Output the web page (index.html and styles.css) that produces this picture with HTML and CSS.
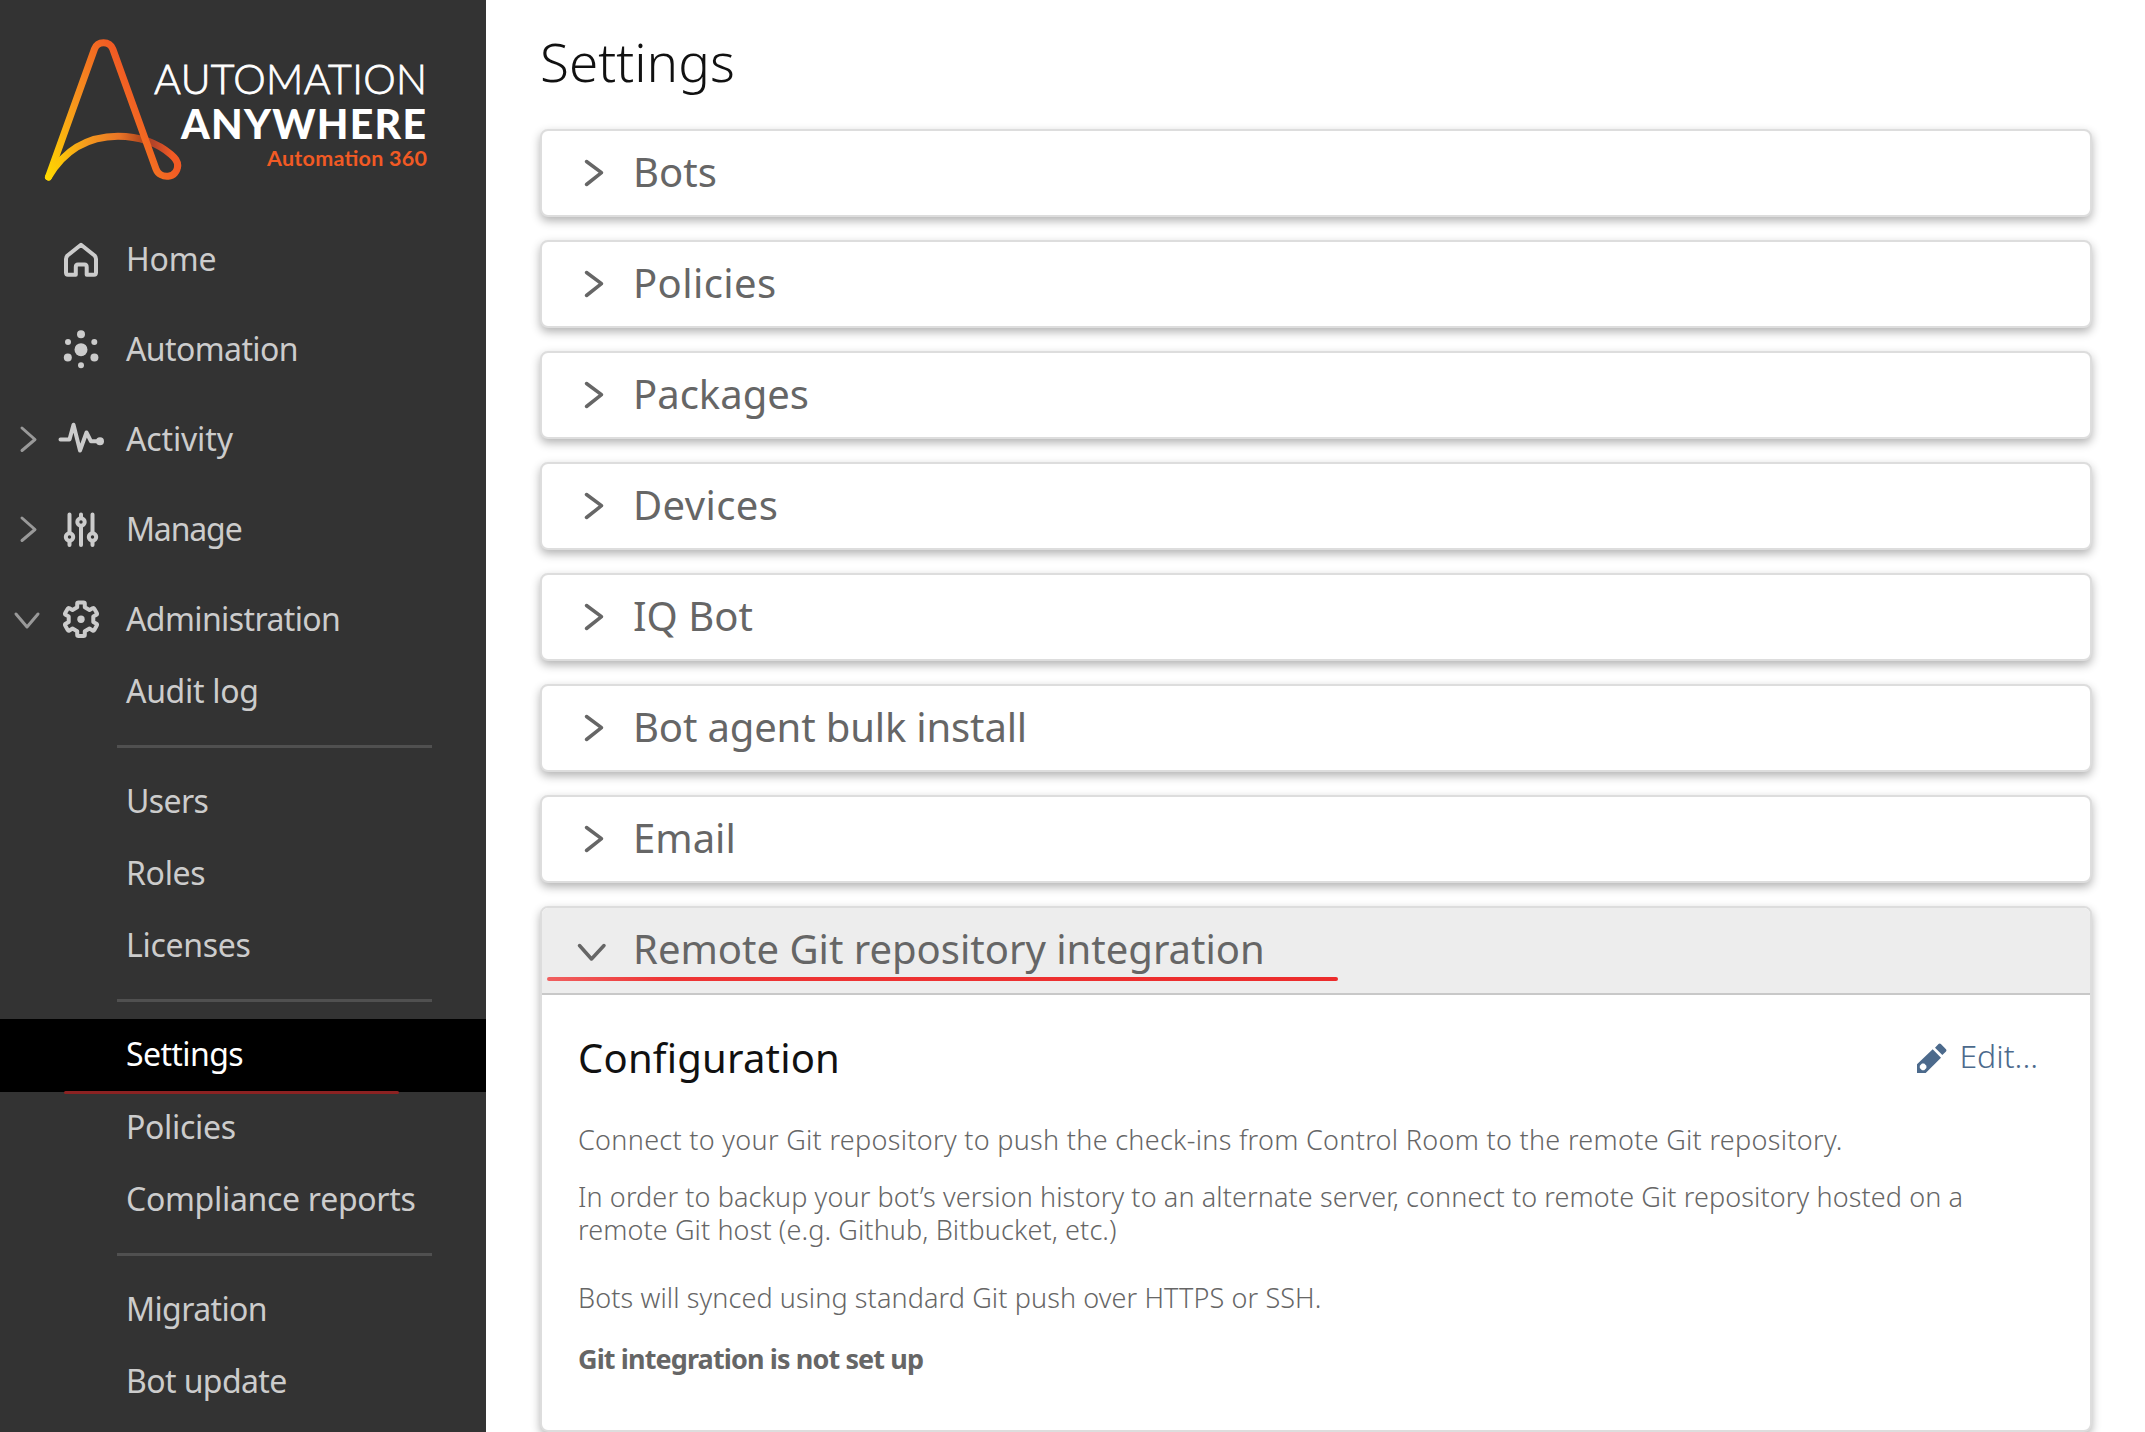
FILE: index.html
```html
<!DOCTYPE html>
<html lang="en">
<head>
<meta charset="utf-8">
<title>Settings</title>
<link rel="stylesheet" href="styles.css">
</head>
<body>
<div class="app">
  <aside class="sidebar">
    <svg class="logo" width="486" height="223" viewBox="0 0 486 223">
      <defs>
        <linearGradient id="leg" gradientUnits="userSpaceOnUse" x1="46" y1="175" x2="152" y2="120">
          <stop offset="0" stop-color="#ffd800"/><stop offset=".5" stop-color="#f7941d"/><stop offset="1" stop-color="#f15a24"/>
        </linearGradient>
        <linearGradient id="arc" gradientUnits="userSpaceOnUse" x1="48" y1="0" x2="178" y2="0">
          <stop offset="0" stop-color="#ffd800"/><stop offset=".3" stop-color="#f59a1d"/><stop offset=".55" stop-color="#e97426"/><stop offset=".75" stop-color="#a9401d"/><stop offset=".82" stop-color="#b8452a"/><stop offset=".95" stop-color="#f15a24"/>
        </linearGradient>
      </defs>
      <path d="M48.500 177C65 149 88 136.500 118 136.300C139 136.500 158 143.500 171 154.500C175 158 178 161 177.700 166" fill="none" stroke="url(#arc)" stroke-width="7" stroke-linecap="round"/>
      <path d="M48.500 177L94.500 49C97.500 40.500 109.500 40.500 112.800 49L156 169C160 179.500 177.500 179 177.700 165" fill="none" stroke="url(#leg)" stroke-width="7" stroke-linecap="round"/>
      <text class="brand-light" x="154" y="93.500" textLength="273">AUTOMATION</text>
      <text class="brand-bold" x="181" y="138.500" textLength="245">ANYWHERE</text>
      <text class="brand-product" x="267" y="165.500" textLength="160">Automation 360</text>
    </svg>
    <nav class="nav">
      <a class="item"><span class="chev"></span>
        <svg class="icon" viewBox="0 0 48 48"><path d="M24 9.800L37.500 20.500Q39 22 39 24V37.500Q39 39.700 37 39.700H29.700V32Q29.700 29.500 27.500 29.500H21Q18.800 29.500 18.800 32V39.700H11Q9 39.700 9 37.500V24Q9 22 10.500 20.500Z"/></svg>
        <span class="loose">Home</span></a>
      <a class="item"><span class="chev"></span>
        <svg class="icon solid" viewBox="0 0 48 48"><circle cx="24" cy="24.700" r="6.500"/><circle cx="24" cy="9.300" r="4"/><circle cx="11" cy="17" r="3"/><circle cx="37.300" cy="17" r="3"/><circle cx="10.800" cy="32.600" r="4"/><circle cx="37.400" cy="32.600" r="4"/><circle cx="24" cy="40.300" r="3"/></svg>
        <span>Automation</span></a>
      <a class="item"><svg class="chev" viewBox="0 0 57 36"><path d="M22 7L35 18.500L22 29.500"/></svg>
        <svg class="icon" viewBox="0 0 48 48"><path d="M3.500 24.500H12.500L16.500 9.800L23 35.500L29.500 17.500L34 26.300H42"/><circle class="dot" cx="43" cy="26.300" r="4"/></svg>
        <span class="loose">Activity</span></a>
      <a class="item"><svg class="chev" viewBox="0 0 57 36"><path d="M22 7L35 18.500L22 29.500"/></svg>
        <svg class="icon" viewBox="0 0 48 48"><path d="M12.500 9.500V27M12.500 37V40M24 9.500V12M24 22V40M35.500 9.500V27M35.500 37V40"/><circle cx="12.500" cy="32" r="3.700"/><circle cx="24" cy="17" r="3.700"/><circle cx="35.500" cy="32" r="3.700"/></svg>
        <span class="tight">Manage</span></a>
      <a class="item"><svg class="chev" viewBox="0 0 57 36"><path d="M16 13L27 26L38 13"/></svg>
        <svg class="icon" viewBox="0 0 48 48"><g transform="translate(24 24.300)"><path d="M-3.800 -12V-15.500Q-3.800 -16.800 -2.500 -16.800H2.500Q3.800 -16.800 3.800 -15.500V-12L8.490 -9.290L11.600 -11.100Q12.650 -11.690 13.300 -10.600L15.800 -6.200Q16.450 -5.110 15.400 -4.500L12.290 -2.710V2.710L15.400 4.500Q16.450 5.110 15.800 6.200L13.300 10.600Q12.650 11.690 11.600 11.100L8.490 9.290L3.800 12V15.500Q3.800 16.800 2.500 16.800H-2.500Q-3.800 16.800 -3.800 15.500V12L-8.490 9.290L-11.600 11.100Q-12.650 11.690 -13.300 10.600L-15.800 6.200Q-16.450 5.110 -15.400 4.500L-12.290 2.710V-2.710L-15.400 -4.500Q-16.450 -5.110 -15.800 -6.200L-13.300 -10.600Q-12.650 -11.690 -11.600 -11.100L-8.490 -9.290Z"/><circle class="dot" r="3.700"/></g></svg>
        <span>Administration</span></a>
      <div class="sub">
        <a class="wide">Audit log</a>
        <hr>
        <a>Users</a>
        <a class="wide">Roles</a>
        <a class="wide">Licenses</a>
        <hr>
        <a class="active">Settings<i class="mark"></i></a>
        <a class="wide">Policies</a>
        <a class="wide">Compliance reports</a>
        <hr>
        <a>Migration</a>
        <a>Bot update</a>
      </div>
    </nav>
  </aside>
  <main class="main">
    <h1>Settings</h1>
    <div class="panels">
      <section class="panel"><header><svg viewBox="0 0 90 84"><path d="M44.500 30.500L59.500 41.700L44.500 53.500"/></svg><h2>Bots</h2></header></section>
      <section class="panel"><header><svg viewBox="0 0 90 84"><path d="M44.500 30.500L59.500 41.700L44.500 53.500"/></svg><h2 class="wide">Policies</h2></header></section>
      <section class="panel"><header><svg viewBox="0 0 90 84"><path d="M44.500 30.500L59.500 41.700L44.500 53.500"/></svg><h2>Packages</h2></header></section>
      <section class="panel"><header><svg viewBox="0 0 90 84"><path d="M44.500 30.500L59.500 41.700L44.500 53.500"/></svg><h2 class="wide">Devices</h2></header></section>
      <section class="panel"><header><svg viewBox="0 0 90 84"><path d="M44.500 30.500L59.500 41.700L44.500 53.500"/></svg><h2>IQ Bot</h2></header></section>
      <section class="panel"><header><svg viewBox="0 0 90 84"><path d="M44.500 30.500L59.500 41.700L44.500 53.500"/></svg><h2 class="narrow">Bot agent bulk install</h2></header></section>
      <section class="panel"><header><svg viewBox="0 0 90 84"><path d="M44.500 30.500L59.500 41.700L44.500 53.500"/></svg><h2>Email</h2></header></section>
      <section class="panel open">
        <header><svg viewBox="0 0 90 84"><path d="M37.500 37.500L49.500 51L62 37.500"/></svg><h2>Remote Git repository integration</h2><i class="mark"></i></header>
        <div class="content">
          <div class="title-row">
            <h3>Configuration</h3>
            <a class="edit"><svg width="30" height="30" viewBox="0 0 30 30"><path d="M18 4.700L21.500 1.100Q22.700 0 23.900 1.100L29 6.200Q30 7.300 29 8.400L25.300 12ZM15.700 6.300L24 14.700L8.700 30H0V21.300ZM5 20.600L2.800 22.800V25L5 27.200H7.200L9.400 25V22.800L7.200 20.600Z" fill-rule="evenodd"/></svg>Edit...</a>
          </div>
          <p class="intro">Connect to your Git repository to push the check-ins from Control Room to the remote Git repository.</p>
          <p class="backup">In order to backup your bot’s version history to an alternate server, connect to remote Git repository hosted on a remote Git host (e.g. Github, Bitbucket, etc.)</p>
          <p class="sync">Bots will synced using standard Git push over HTTPS or SSH.</p>
          <p class="status">Git integration is not set up</p>
        </div>
      </section>
    </div>
  </main>
</div>
</body>
</html>
```
FILE: styles.css
```css
* { box-sizing: border-box; }
body { margin: 0; background: #fff; font-family: "Noto Sans", sans-serif; overflow: hidden; }
.app { display: flex; width: 2145px; height: 1432px; }
h1, h2, h3, p { margin: 0; font-weight: 400; }

.sidebar { width: 486px; background: #333; color: #ccc; overflow: hidden; }
.logo { display: block; }
.logo text { font-family: Lato, sans-serif; fill: #fff; }
.logo .brand-light { font-size: 41px; font-weight: 300; stroke: #fff; stroke-width: .8px; }
.logo .brand-bold { font-size: 41px; font-weight: 900; }
.logo .brand-product { font-size: 21.500px; font-weight: 700; fill: #f15a24; }

.nav { font-size: 32px; letter-spacing: -.6px; }
.item { display: flex; align-items: center; height: 72px; margin-bottom: 18px; }
.item:last-of-type { margin-bottom: 0; }
.item span:not(.chev) { line-height: 70px; margin: 0 0 1px 21px; }
.item .loose { letter-spacing: -.15px; }
.item .tight { letter-spacing: -1.150px; }
.chev { width: 57px; height: 36px; fill: none; stroke: #999; stroke-width: 3; stroke-linecap: round; stroke-linejoin: round; }
.icon { width: 48px; height: 48px; fill: none; stroke: #ccc; stroke-width: 4; stroke-linejoin: round; stroke-linecap: round; }
.icon.solid, .icon .dot { fill: #ccc; stroke: none; }
.sub a { display: block; height: 72px; line-height: 71px; padding-left: 126px; }
.sub .wide { letter-spacing: -.3px; }
.sub hr { height: 3px; margin: 18px 54px 17px 117px; border: 0; background: #505050; }
.sub .active { position: relative; background: #000; color: #fff; line-height: 70px; box-shadow: 0 1px #000; }
.mark { position: absolute; height: 4px; border-radius: 2px; }
.active .mark { left: 64px; bottom: -3px; width: 335px; height: 3px; background: #8c2222; }

.main { flex: 1; padding: 25px 53px 0 54px; }
h1 { height: 104px; line-height: 73px; font-size: 53px; font-weight: 300; color: #111; }
.panels { display: flex; flex-direction: column; gap: 23px; }
.panel { border: 2px solid #ddd; border-radius: 8px; box-shadow: 0 4px 10px rgba(0, 0, 0, .3); background: #fff; }
.panel header { display: flex; align-items: center; height: 84px; color: #666; }
.panel header svg { width: 90px; height: 84px; fill: none; stroke: #666; stroke-width: 3.500; stroke-linecap: round; stroke-linejoin: round; }
h2 { font-size: 40px; line-height: 80px; padding: 0 0 3px 1px; }
h2.wide { letter-spacing: .4px; }
h2.narrow { letter-spacing: -.15px; }
.open { height: 526px; }
.open header { position: relative; height: 87px; padding-bottom: 1px; border-bottom: 2px solid #c8c8c8; background: #ededed; border-radius: 6px 6px 0 0; }
header .mark { left: 5px; top: 69px; width: 791px; background: linear-gradient(90deg, #f06060, #ee3535 15%, #ec2c2c); }
.content { padding: 39px 52px 0 36px; color: #666; }
.title-row { display: flex; justify-content: space-between; align-items: center; height: 48px; margin-bottom: 41px; }
h3 { font-size: 40px; line-height: 48px; color: #111; letter-spacing: .2px; }
.edit { display: flex; align-items: center; gap: 12px; height: 44px; font-size: 32px; line-height: 44px; font-weight: 300; color: #4c6a8c; margin-top: -4px; }
.edit svg { fill: #4c6a8c; margin-top: 4px; }
.content p { font-size: 27px; line-height: 33px; font-weight: 300; letter-spacing: .11px; width: 1400px; }
.content .intro { letter-spacing: .3px; }
.content .backup { margin-top: 24px; }
.content .sync { margin-top: 35px; }
.content .status { margin-top: 28px; font-weight: 700; letter-spacing: -.88px; }
```
